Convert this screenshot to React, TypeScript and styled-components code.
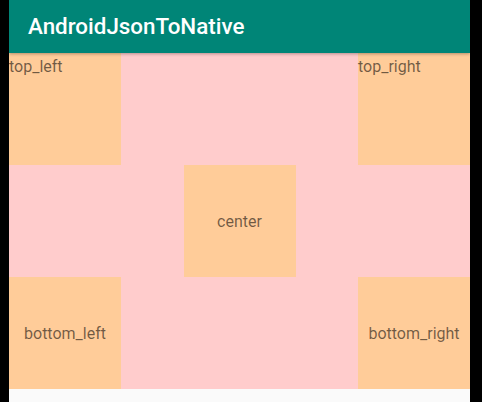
import React from "react";
import styled, { createGlobalStyle } from "styled-components";

const Global = createGlobalStyle`
  html, body { margin: 0; padding: 0; background: #000; }
  body { font-family: Roboto, "Noto Sans", sans-serif; }
`;

const Screen = styled.div`
  width: 461px;
  height: 402px;
  margin-left: 9px;
  background: #fafafa;
  display: flex;
  flex-direction: column;
  overflow: hidden;
`;

const AppBar = styled.header`
  position: relative;
  z-index: 1;
  height: 53px;
  flex-shrink: 0;
  background: #008577;
  box-shadow: 0 1px 3px rgba(0, 0, 0, 0.3);
  display: flex;
  align-items: center;
  padding-left: 19px;
`;

const Title = styled.h1`
  margin: 0;
  color: #fff;
  font-family: Roboto, sans-serif;
  font-weight: 500;
  font-size: 22.4px;
  padding-bottom: 2px;
`;

const Frame = styled.main`
  background: #ffcccc;
  display: grid;
  grid-template-rows: repeat(3, 112px);
`;

const Row = styled.div<{ $justify: string }>`
  display: flex;
  justify-content: ${(p) => p.$justify};
`;

const Box = styled.div<{ $center?: boolean }>`
  width: 112px;
  height: 112px;
  background: #ffcc99;
  display: flex;
  align-items: ${(p) => (p.$center ? "center" : "flex-start")};
  justify-content: ${(p) => (p.$center ? "center" : "flex-start")};
`;

const Label = styled.span<{ $top?: boolean }>`
  font-family: Roboto, sans-serif;
  font-size: 16px;
  line-height: 19px;
  color: rgba(0, 0, 0, 0.56);
  padding-top: ${(p) => (p.$top ? "4px" : "0")};
`;

export default function App() {
  return (
    <>
      <Global />
      <Screen>
        <AppBar>
          <Title>AndroidJsonToNative</Title>
        </AppBar>
        <Frame>
          <Row $justify="space-between">
            <Box><Label $top>top_left</Label></Box>
            <Box><Label $top>top_right</Label></Box>
          </Row>
          <Row $justify="center">
            <Box $center><Label>center</Label></Box>
          </Row>
          <Row $justify="space-between">
            <Box $center><Label>bottom_left</Label></Box>
            <Box $center><Label>bottom_right</Label></Box>
          </Row>
        </Frame>
      </Screen>
    </>
  );
}
